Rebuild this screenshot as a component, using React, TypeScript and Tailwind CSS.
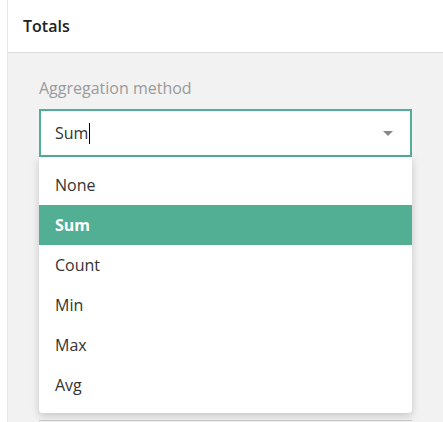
import React from 'react';

const options = ['None', 'Sum', 'Count', 'Min', 'Max', 'Avg'];

const App: React.FC = () => {
  const selected = 'Sum';

  return (
    <div className="h-[422px] overflow-hidden bg-white font-['Open_Sans',sans-serif] text-[16px] text-[#333333]">
      <div className="ml-[7px] flex h-full flex-col border-l border-[#e8e8e8]">
        {/* Header */}
        <div className="flex h-[53px] shrink-0 items-center border-b border-[#dddddd] bg-white pl-[15px]">
          <span className="font-semibold text-[#222222]">Totals</span>
        </div>

        {/* Body */}
        <div className="flex-1 bg-[#f2f2f2] pl-[31px] pr-[31px] pt-[25px]">
          <div className="mb-[11px] h-[20px] leading-[20px] text-[#9a9a9a]">Aggregation method</div>

          <div className="relative">
            <div className="flex h-[48px] items-center justify-between border-2 border-[#52ae94] bg-white pl-[14px] pr-[17px]">
              <div className="flex items-center">
                <span>{selected}</span>
                <span className="ml-[1px] h-[21px] w-px bg-black" />
              </div>
              <svg width="10" height="5" viewBox="0 0 10 5">
                <path d="M0 0 L10 0 L5 5 Z" fill="#888888" />
              </svg>
            </div>

            {/* Dropdown menu */}
            <div className="absolute left-0 right-0 top-[48px] z-10 rounded-b-[4px] bg-white py-2 shadow-[0_3px_8px_rgba(0,0,0,0.18)]">
              {options.map((o) => (
                <div
                  key={o}
                  className={
                    o === selected
                      ? 'flex h-[40px] items-center bg-[#52af93] pl-[16px] font-bold text-white'
                      : 'flex h-[40px] items-center pl-[16px]'
                  }
                >
                  {o}
                </div>
              ))}
            </div>
          </div>

          <div className="mt-[263px] h-[40px] border-t border-[#cccccc] bg-[#f0f0f0]" />
        </div>
      </div>
    </div>
  );
};

export default App;
